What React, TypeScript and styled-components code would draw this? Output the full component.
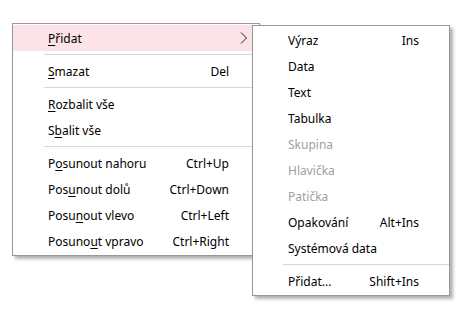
import styled, { createGlobalStyle } from 'styled-components';

const GlobalStyle = createGlobalStyle`
  html, body {
    margin: 0;
    padding: 0;
    background: #fff;
  }
  body {
    font-family: "Noto Sans", "Open Sans", sans-serif;
    font-size: 12px;
    color: #000;
  }
`;

const Page = styled.div`
  width: 465px;
  height: 311px;
  padding: 23px 0 0 12px;
  box-sizing: border-box;
`;

const MenuBox = styled.div<{ $width: number }>`
  position: relative;
  width: ${(p) => p.$width}px;
  box-sizing: border-box;
  padding: 1px 0;
  background: #fff;
  border: 1px solid #979797;
  box-shadow: 3px 3px 3px rgba(0, 0, 0, 0.3);
`;

const SubMenu = styled(MenuBox)`
  position: absolute;
  left: 239px;
  top: 1px;
  z-index: 2;
`;

const Item = styled.div<{ $active?: boolean; $disabled?: boolean; $indent: number }>`
  display: flex;
  align-items: center;
  justify-content: space-between;
  height: 26px;
  padding: 0 30px 0 ${(p) => p.$indent}px;
  background: ${(p) => (p.$active ? '#fce3e7' : 'transparent')};
  color: ${(p) => (p.$disabled ? '#a0a0a0' : '#000')};
  white-space: nowrap;
`;

const Shortcut = styled.span`
  text-align: right;
`;

const Arrow = styled.svg`
  position: absolute;
  right: 11px;
  top: 8px;
`;

const Separator = styled.div<{ $indent: number }>`
  height: 7px;
  display: flex;
  align-items: center;
  padding-left: ${(p) => p.$indent}px;
  &::after {
    content: '';
    flex: 1;
    height: 1px;
    background: #d7d7d7;
  }
`;

const Acc = styled.span`
  text-decoration: underline;
  text-underline-offset: 2px;
`;

type Entry =
  | { sep: true }
  | { sep?: false; pre?: string; acc?: string; post?: string; key?: string; disabled?: boolean };

const mainItems: Entry[] = [
  { acc: 'P', post: 'řidat' },
  { sep: true },
  { acc: 'S', post: 'mazat', key: 'Del' },
  { sep: true },
  { acc: 'R', post: 'ozbalit vše' },
  { pre: 'S', acc: 'b', post: 'alit vše' },
  { sep: true },
  { pre: 'P', acc: 'o', post: 'sunout nahoru', key: 'Ctrl+Up' },
  { pre: 'Pos', acc: 'u', post: 'nout dolů', key: 'Ctrl+Down' },
  { pre: 'Posu', acc: 'n', post: 'out vlevo', key: 'Ctrl+Left' },
  { pre: 'Posuno', acc: 'u', post: 't vpravo', key: 'Ctrl+Right' },
];

const subItems: Entry[] = [
  { pre: 'Výraz', key: 'Ins' },
  { pre: 'Data' },
  { pre: 'Text' },
  { pre: 'Tabulka' },
  { pre: 'Skupina', disabled: true },
  { pre: 'Hlavička', disabled: true },
  { pre: 'Patička', disabled: true },
  { pre: 'Opakování', key: 'Alt+Ins' },
  { pre: 'Systémová data' },
  { sep: true },
  { pre: 'Přidat...', key: 'Shift+Ins' },
];

const renderItems = (items: Entry[], indent: number, sepIndent: number) =>
  items.map((it, i) =>
    it.sep ? (
      <Separator key={i} $indent={sepIndent} />
    ) : (
      <Item key={i} $indent={indent} $disabled={it.disabled} $active={items === mainItems && i === 0}>
        <span>
          {it.pre}
          {it.acc && <Acc>{it.acc}</Acc>}
          {it.post}
        </span>
        {it.key && <Shortcut>{it.key}</Shortcut>}
      </Item>
    )
  );

const App = () => {
  return (
    <Page>
      <GlobalStyle />
      <MenuBox $width={248}>
        {renderItems(mainItems, 35, 31)}
        <Arrow width="8" height="12" viewBox="0 0 8 12">
          <path d="M1 0.5 L6.5 6 L1 11.5" fill="none" stroke="#222" strokeWidth="1" />
        </Arrow>
        <SubMenu $width={198}>{renderItems(subItems, 35, 30)}</SubMenu>
      </MenuBox>
    </Page>
  );
};

export default App;
